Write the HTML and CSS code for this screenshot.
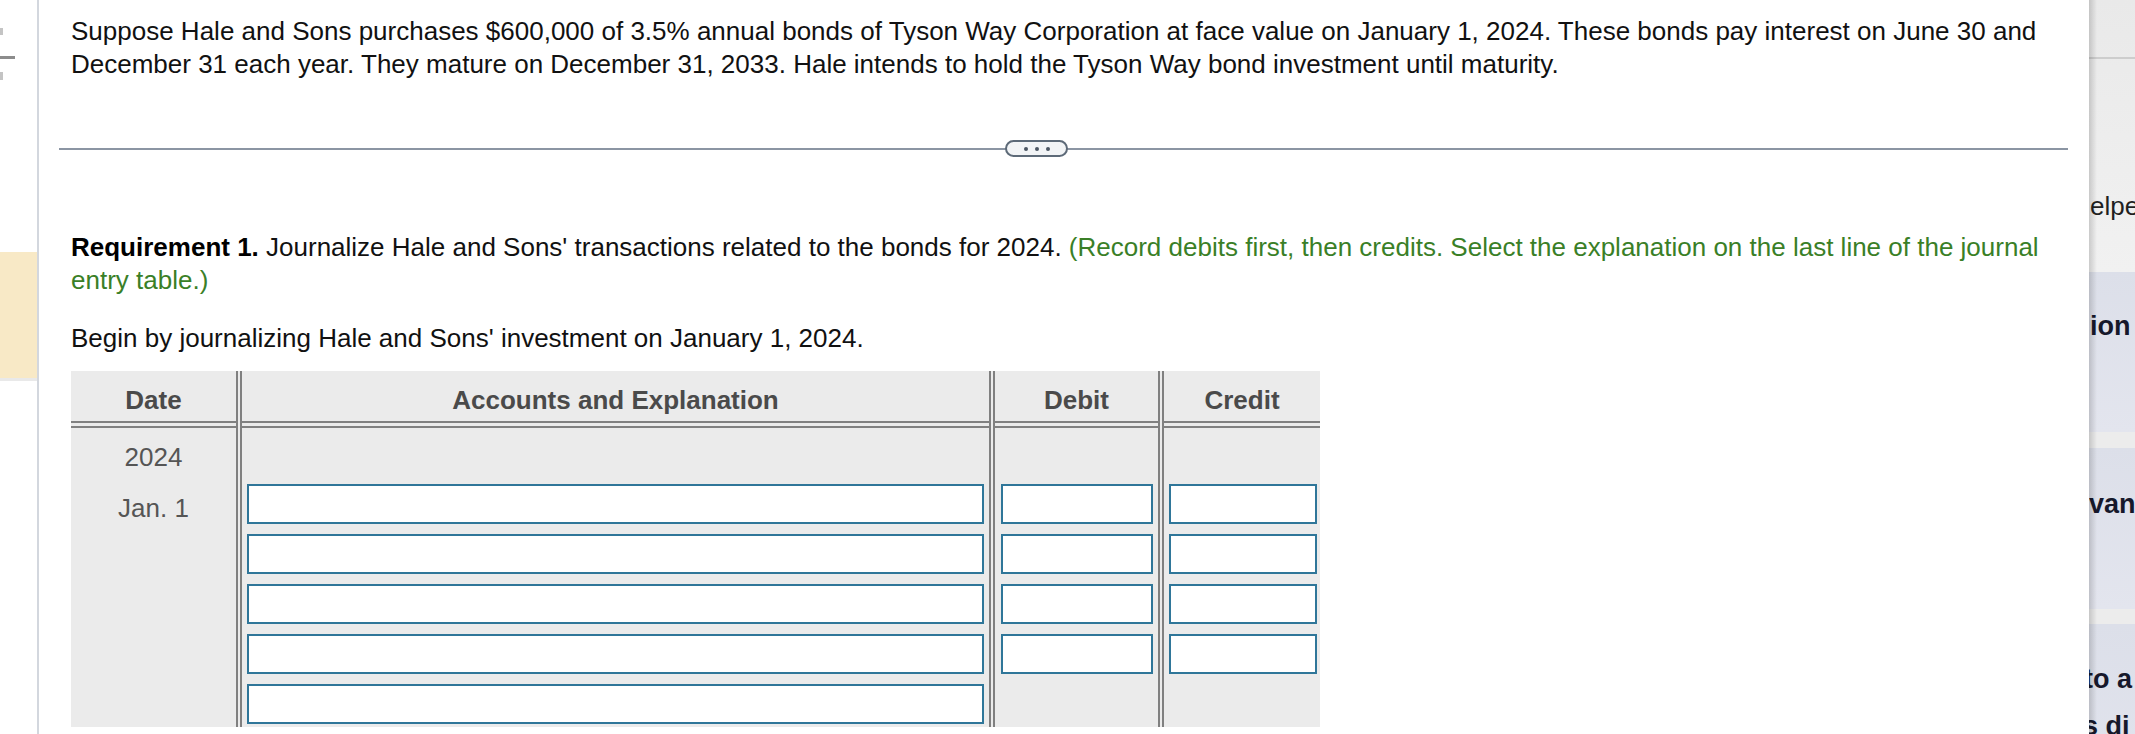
FILE: index.html
```html
<!DOCTYPE html>
<html lang="en">
<head>
<meta charset="utf-8">
<title>Requirement 1</title>
<link rel="stylesheet" href="styles.css">
</head>
<body>
<div class="page">
  <aside class="rail">
    <svg class="rail-icon" width="37" height="64" viewBox="0 0 37 64" aria-hidden="true">
      <rect x="0" y="4" width="3" height="7" fill="#c4c4c4"/>
      <rect x="0" y="32" width="15" height="3" fill="#8c8c8c"/>
      <rect x="0" y="48" width="3" height="8" fill="#c4c4c4"/>
    </svg>
    <div class="rail-note"></div>
  </aside>

  <main class="main">
    <p class="text intro">Suppose Hale and Sons purchases $600,000 of 3.5% annual bonds of Tyson Way Corporation at face value on January 1, 2024. These bonds pay interest on June 30 and December 31 each year. They mature on December 31, 2033. Hale intends to hold the Tyson Way bond investment until maturity.</p>

    <div class="divider">
      <button class="more" type="button" aria-label="More"><span></span><span></span><span></span></button>
    </div>

    <p class="text req"><b>Requirement 1.</b> Journalize Hale and Sons' transactions related to the bonds for 2024. <span class="hint">(Record debits first, then credits. Select the explanation on the last line of the journal entry table.)</span></p>

    <p class="text begin">Begin by journalizing Hale and Sons' investment on January 1, 2024.</p>

    <div class="journal">
      <div class="col col-date">
        <div class="th">Date</div>
        <div class="td date-cell">
          <div class="year">2024</div>
          <div class="day">Jan. 1</div>
        </div>
      </div>
      <div class="col col-acct">
        <div class="th">Accounts and Explanation</div>
        <div class="td inputs">
          <div class="in"></div>
          <div class="in"></div>
          <div class="in"></div>
          <div class="in"></div>
          <div class="in"></div>
        </div>
      </div>
      <div class="col col-debit">
        <div class="th">Debit</div>
        <div class="td inputs">
          <div class="in"></div>
          <div class="in"></div>
          <div class="in"></div>
          <div class="in"></div>
        </div>
      </div>
      <div class="col col-credit">
        <div class="th">Credit</div>
        <div class="td inputs">
          <div class="in"></div>
          <div class="in"></div>
          <div class="in"></div>
          <div class="in"></div>
        </div>
      </div>
    </div>
  </main>

  <aside class="side">
    <div class="side-top">
      <div class="side-bar"></div>
      <p class="side-text">elpe</p>
    </div>
    <div class="card card-1"><p class="card-text">ion</p></div>
    <div class="card card-2"><p class="card-text">van</p></div>
    <div class="card card-3">
      <p class="card-text cut">to a</p>
      <p class="card-text cut2">s di</p>
    </div>
  </aside>
</div>
</body>
</html>
```
FILE: styles.css
```css
* { box-sizing: border-box; }

html, body {
  margin: 0;
  padding: 0;
  background: #ffffff;
}

body {
  width: 2135px;
  height: 734px;
  overflow: hidden;
  font-family: "Liberation Sans", Arial, Helvetica, sans-serif;
  font-size: 26px;
  line-height: 33px;
  color: #111111;
}

.page {
  display: flex;
  height: 734px;
}

/* left rail */
.rail {
  flex: none;
  width: 39px;
  border-right: 2px solid #d3d7de;
}

.rail-icon {
  display: block;
  margin-top: 24px;
}

.rail-note {
  margin-top: 164px;
  height: 129px;
  background: #f8e9c6;
  border-bottom: 3px solid #e9e9e9;
}

/* main */
.main {
  flex: 1;
  min-width: 0;
  padding: 15px 21px 0 20px;
}

.text {
  margin: 0 0 0 12px;
}

.divider {
  position: relative;
  height: 18px;
  margin-top: 60px;
}

.divider::before {
  content: "";
  position: absolute;
  left: 0;
  right: 0;
  top: 8px;
  height: 2px;
  background: #8b95a3;
}

.more {
  position: relative;
  z-index: 1;
  margin: -1px 0 0 946px;
  width: 63px;
  height: 17px;
  padding: 0;
  border: 2px solid #5d6a78;
  border-radius: 9px;
  background: #f2f4f6;
  display: flex;
  align-items: center;
  justify-content: center;
  gap: 7px;
}

.more span {
  width: 4px;
  height: 4px;
  border-radius: 50%;
  background: #4b5563;
}

.req {
  margin-top: 73px;
}

.req b {
  font-weight: bold;
  color: #000000;
}

.hint {
  color: #3a7f27;
}

.begin {
  margin-top: 25px;
}

/* journal table */
.journal {
  margin: 16px 0 0 12px;
  width: 1249px;
  display: flex;
  background: #ebebeb;
}

.col {
  flex: none;
  border-right: 6px double #808080;
}

.col-date { width: 171px; }
.col-acct { width: 753px; }
.col-debit { width: 169px; }
.col-credit { width: 156px; border-right: none; }

.th {
  height: 57px;
  padding-top: 9px;
  border-bottom: 7px double #808080;
  display: flex;
  align-items: center;
  justify-content: center;
  font-weight: bold;
  color: #4a4a4a;
}

.td {
  height: 299px;
}

.date-cell {
  padding-top: 13px;
  text-align: center;
  color: #555555;
}

.day {
  margin-top: 18px;
}

.inputs {
  padding-top: 56px;
  display: flex;
  flex-direction: column;
  gap: 10px;
}

.col-acct .inputs { padding-left: 5px; padding-right: 5px; }
.col-debit .inputs { padding-left: 6px; padding-right: 5px; }
.col-credit .inputs { padding-left: 5px; padding-right: 3px; }

.in {
  flex: none;
  height: 40px;
  border: 2px solid #2f7699;
  background: #ffffff;
}

/* right side panel */
.side {
  flex: none;
  width: 46px;
  position: relative;
  overflow: hidden;
  background: #ececec;
}

.side::after {
  content: "";
  position: absolute;
  top: 0;
  bottom: 0;
  left: 0;
  width: 8px;
  background: linear-gradient(to right, rgba(0,0,0,0.16), rgba(0,0,0,0));
  pointer-events: none;
}

.side-top {
  height: 272px;
  background: linear-gradient(to bottom, #e9e9e9, #f1f1f1);
}

.side-bar {
  height: 59px;
  border-bottom: 2px solid #cdcdcd;
}

.side-text {
  margin: 131px 0 0 1px;
  color: #1f1f1f;
  white-space: nowrap;
}

.card {
  height: 160px;
  background: linear-gradient(to bottom, #dcdfe9, #e3e5ee);
  padding-top: 38px;
}

.card-2 {
  margin-top: 16px;
  height: 161px;
  padding-top: 40px;
}

.card-3 {
  margin-top: 15px;
  height: 200px;
  padding-top: 39px;
}

.card-text {
  margin: 0 0 0 1px;
  font-weight: bold;
  font-size: 27px;
  color: #16182b;
  white-space: nowrap;
}

.card-2 .card-text { margin-left: 0; }

.cut { margin-left: -5px; }

.cut2 {
  margin-top: 14px;
  margin-left: -6px;
}
```
